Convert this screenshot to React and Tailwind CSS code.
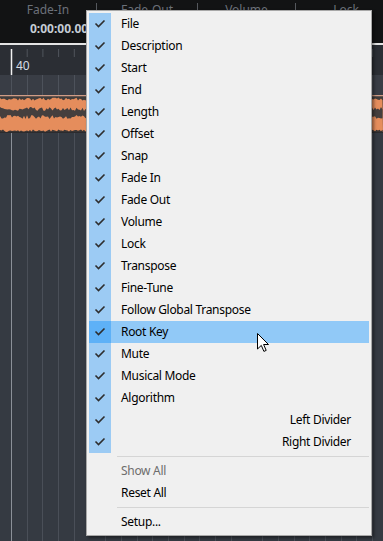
import React from "react";

const items = [
  "File", "Description", "Start", "End", "Length", "Offset", "Snap", "Fade In",
  "Fade Out", "Volume", "Lock", "Transpose", "Fine-Tune", "Follow Global Transpose",
  "Root Key", "Mute", "Musical Mode", "Algorithm", "Left Divider", "Right Divider",
];

// little pseudo random wave for the audio event
function noise(i, seed) {
  const v = Math.sin(i * 12.9898 + seed * 78.233) * 43758.5453;
  return v - Math.floor(v);
}

function wavePaths() {
  let top = "M0,38";
  let bandTop = "";
  let bandBot = "";
  let bottom = "";
  for (let x = 0; x <= 383; x += 1.5) {
    top += ` L${x},${2.5 + noise(x, 1) * 3}`;
    bandTop += `${bandTop ? " L" : "M"}${x},${12 + noise(x, 2) * 4}`;
    bandBot = ` L${x},${20 + noise(x, 3) * 4}` + bandBot;
    bottom += ` L${x},${34.5 + noise(x, 4) * 2.5}`;
  }
  top += " L383,38 Z";
  const band = bandTop + bandBot + " Z";
  const low = "M0,38" + bottom + " L383,38 Z";
  return { top, band, low };
}

const wave = wavePaths();

function Check() {
  return (
    <svg width="22" height="22" viewBox="0 0 22 22">
      <path d="M6.5 10.5 L9.5 13.5 L15.5 7.5" fill="none" stroke="#2e2e2e" strokeWidth="1.6" />
    </svg>
  );
}

function Header() {
  const cols = [
    { label: "Fade-In", w: "w-[96px]", value: "0:00:00.000" },
    { label: "Fade-Out", w: "w-[100px]" },
    { label: "Volume", w: "w-[97px]" },
    { label: "Lock", w: "w-[100px]" },
  ];
  return (
    <div className="flex h-[43px] bg-[#121314] shrink-0">
      {cols.map((c, i) => (
        <div key={c.label} className="flex">
          {i > 0 && <div className="w-px h-[16px] mt-[3px] bg-[#55585d]" />}
          <div className={`${c.w} flex flex-col overflow-hidden text-[12px]`}>
            <div className="pt-[2px] leading-[16px] text-center text-[#6b7079]">{c.label}</div>
            {c.value && (
              <div className="mt-[3px] pl-[30px] leading-[16px] font-bold text-[#c5ccd4] whitespace-nowrap">
                {c.value}
              </div>
            )}
          </div>
        </div>
      ))}
    </div>
  );
}

function Timeline() {
  return (
    <div className="flex flex-col flex-1">
      <div className="h-[2px] bg-[#e4e4e4]" />
      {/* ruler */}
      <div className="relative h-[30px] bg-[#2b2e34]">
        <svg width="383" height="30" className="block">
          {Array.from({ length: 24 }).map((_, k) => {
            const x = 11.5 + k * 15.7;
            return k === 0 ? (
              <line key={k} x1={11.5} y1={4} x2={11.5} y2={30} stroke="#f2f2f2" strokeWidth="1.5" />
            ) : (
              <line key={k} x1={x} y1={4} x2={x} y2={12} stroke="#50545c" strokeWidth="1" />
            );
          })}
        </svg>
        <span className="absolute left-[16px] top-[14px] text-[12px] leading-[14px] text-[#d6dde5]">40</span>
      </div>
      <div className="h-[20px] bg-[#393d45] bg-[repeating-linear-gradient(90deg,transparent_0_11px,#4d525b_11px_12px,transparent_12px_15.7px)]" />
      {/* audio event */}
      <svg width="383" height="38" className="block bg-[#403c3b]">
        <line x1="0" y1="0.5" x2="383" y2="0.5" stroke="#cf9c86" strokeWidth="1.5" />
        <path d={wave.top} fill="#e58d5c" />
        <path d={wave.band} fill="#453f3e" />
        <path d={wave.low} fill="#3a3534" />
        <line x1="0" y1="37.5" x2="383" y2="37.5" stroke="#2b2b2e" />
      </svg>
      <div className="flex-1 bg-[#353a42] bg-[repeating-linear-gradient(90deg,transparent_0_11px,#4a4f58_11px_12px,transparent_12px_15.7px)]">
        <div className="ml-[11px] w-px h-full bg-[#8b9098]" />
      </div>
    </div>
  );
}

function Menu() {
  return (
    <div className="absolute left-[86px] top-[10px] w-[286px] border border-[#a8a8a8] bg-[#f0f0f0] p-[2px] shadow-[2px_2px_3px_rgba(0,0,0,0.45)] text-[12px] tracking-[-0.3px] text-black">
      {items.map((it) => {
        const hot = it === "Root Key";
        const right = it === "Left Divider" || it === "Right Divider";
        return (
          <div key={it} className={`flex h-[22px] items-center ${hot ? "bg-[#91c9f7]" : ""}`}>
            <div className={`w-[22px] h-[22px] shrink-0 ${hot ? "bg-[#5eb1f7]" : "bg-[#9ccbf4]"}`}>
              <Check />
            </div>
            <div className={`flex-1 leading-[22px] whitespace-nowrap ${right ? "text-right pr-[18px]" : "pl-[10px]"}`}>
              {it}
            </div>
          </div>
        );
      })}
      <div className="h-[7px] flex items-center pl-[28px]">
        <div className="h-px w-full bg-[#d5d5d5]" />
      </div>
      <div className="h-[22px] leading-[22px] pl-[32px] text-[#6d6d6d]">Show All</div>
      <div className="h-[22px] leading-[22px] pl-[32px]">Reset All</div>
      <div className="h-[7px] flex items-center pl-[28px]">
        <div className="h-px w-full bg-[#d5d5d5]" />
      </div>
      <div className="h-[22px] leading-[22px] pl-[32px]">Setup...</div>
    </div>
  );
}

function Cursor() {
  return (
    <svg className="absolute left-[257px] top-[333px]" width="13" height="20" viewBox="0 0 13 20">
      <path
        d="M0.5 0.5 L0.5 16 L4.3 12.4 L6.9 18.4 L9.2 17.4 L6.6 11.5 L11.5 11.5 Z"
        fill="#ffffff"
        stroke="#000000"
        strokeWidth="1"
        strokeLinejoin="miter"
      />
    </svg>
  );
}

export default function App() {
  return (
    <div className="relative w-[383px] h-[541px] overflow-hidden flex flex-col bg-[#353a42] font-['Noto_Sans',sans-serif]">
      <Header />
      <Timeline />
      <Menu />
      <Cursor />
    </div>
  );
}
